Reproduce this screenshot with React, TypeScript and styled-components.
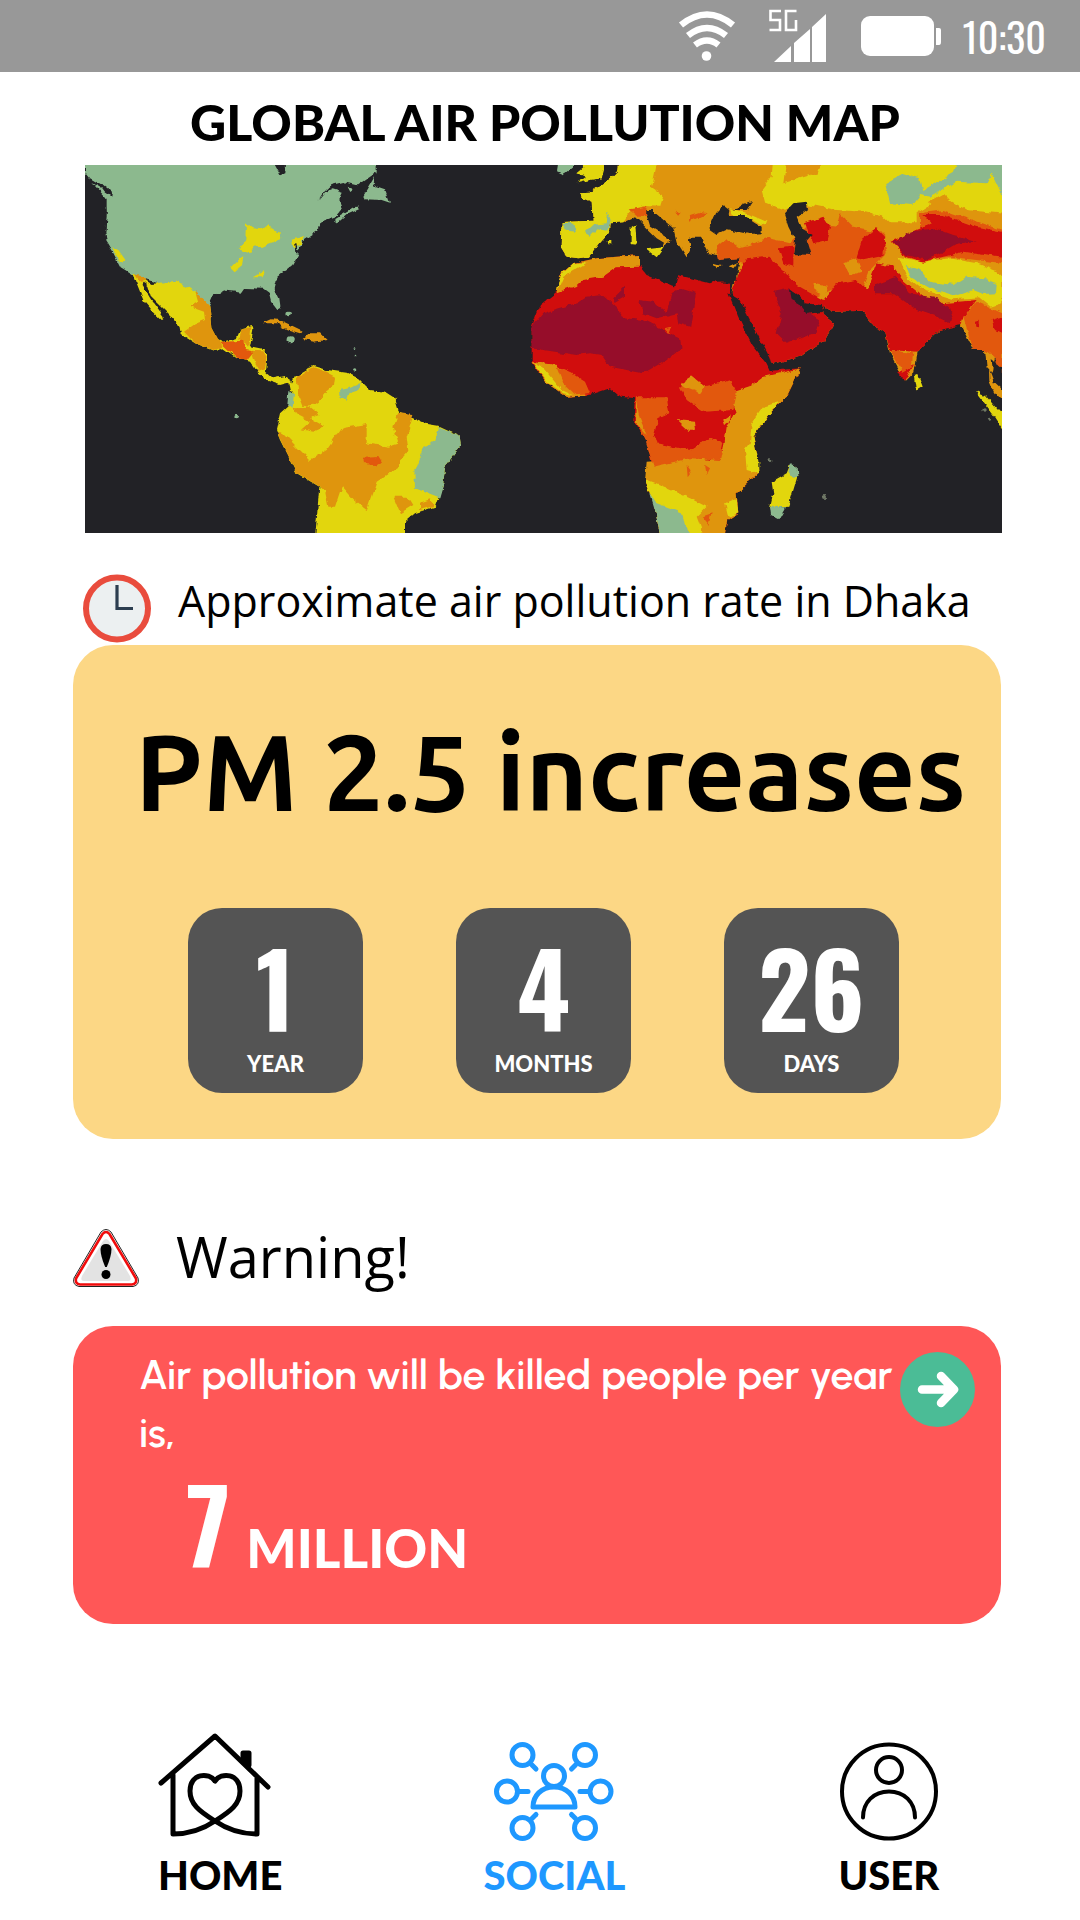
import React from "react";
import styled, { createGlobalStyle } from "styled-components";

const GlobalStyle = createGlobalStyle`
  *, *::before, *::after { box-sizing: border-box; }
  body { margin: 0; background: #fff; color: #000; font-family: "Open Sans", "Noto Sans", sans-serif; }
  h1, h2, p { margin: 0; }
`;

const condensed = `"Oswald", "Liberation Sans Narrow", "Roboto Condensed", "Open Sans Condensed", "DejaVu Sans Condensed", sans-serif`;

const Page = styled.div`
  display: flex;
  flex-direction: column;
  min-height: 100vh;
`;

const StatusBar = styled.header`
  display: flex;
  align-items: center;
  justify-content: flex-end;
  height: 72px;
  padding-right: 34px;
  background: #989898;
  color: #fff;
`;

const StatusIcon = styled.svg<{ $gap: number }>`
  flex: none;
  margin-right: ${(p) => p.$gap}px;
`;

const Time = styled.time`
  font: 400 40px/72px ${condensed};
`;

const Main = styled.main`
  flex: 1;
  padding: 0 79px 0 73px;
`;

const Title = styled.h1`
  padding: 20px 0 0 16px;
  font: 900 50px/60px Lato, sans-serif;
  text-align: center;
`;

const MapImage = styled.svg`
  display: block;
  width: calc(100% - 11px);
  height: auto;
  margin: 13px 0 0 12px;
`;

const SectionHead = styled.div<{ $top: number; $gap: number; $indent: number }>`
  display: flex;
  align-items: flex-start;
  gap: ${(p) => p.$gap}px;
  min-height: 71px;
  margin-top: ${(p) => p.$top}px;
  padding-left: ${(p) => p.$indent}px;
`;

const SectionTitle = styled.h2<{ $size: number }>`
  font: 400 ${(p) => p.$size}px/54px "Open Sans", "Noto Sans", sans-serif;
  white-space: nowrap;
`;

const RateCard = styled.section`
  padding: 66px 32px 46px 62px;
  border-radius: 40px;
  background: #fcd785;
`;

const Headline = styled.p`
  font: 700 107px/120px "Ubuntu", "Noto Sans", "Open Sans", sans-serif;
  white-space: nowrap;
`;

const Tiles = styled.div`
  display: flex;
  justify-content: space-between;
  margin-top: 77px;
  padding: 0 70px 0 53px;
`;

const Tile = styled.div`
  display: flex;
  flex-direction: column;
  align-items: center;
  gap: 6px;
  width: 175px;
  height: 185px;
  padding-top: 23px;
  border-radius: 34px;
  background: #545454;
  color: #fff;
`;

const Figure = styled.span`
  font: 700 101px/112px ${condensed};
`;

const Unit = styled.span`
  font: 900 22px/30px Lato, sans-serif;
`;

const WarningCard = styled.section`
  display: flex;
  justify-content: space-between;
  min-height: 298px;
  margin-top: 26px;
  padding: 20px 26px 20px 66px;
  border-radius: 40px;
  background: #ff5757;
  color: #fff;
`;

const WarningText = styled.p`
  font: 600 41px/58px "Urbanist", "Outfit", Lato, sans-serif;
`;

const Toll = styled.p`
  display: flex;
  align-items: baseline;
  gap: 16px;
  padding: 5px 0 0 47px;
`;

const TollUnit = styled.span`
  font: 900 53px/60px Lato, sans-serif;
`;

const GoButton = styled.button`
  flex: none;
  width: 75px;
  height: 75px;
  margin-top: 6px;
  padding: 0;
  border: 0;
  border-radius: 50%;
  background: #4bbc96;
  cursor: pointer;
`;

const Nav = styled.nav`
  display: grid;
  grid-template-columns: repeat(3, 1fr);
  padding: 0 24px 21px 53px;
`;

const NavLink = styled.a<{ $active?: boolean }>`
  display: flex;
  flex-direction: column;
  align-items: center;
  color: ${(p) => (p.$active ? "#1e98ff" : "#000")};
  font: 900 40px/48px Lato, sans-serif;
  text-decoration: none;

  svg { margin-bottom: 7px; }
`;

const C = {
  sea: "#232227",
  green: "#8cb98e",
  yellow: "#e2d60b",
  orange: "#df950f",
  deep: "#e2590d",
  red: "#d10b0a",
  maroon: "#960a29",
};

function PollutionMap() {
  return (
    <MapImage viewBox="15 15 2751 1104" role="img" aria-label="World map shaded by air pollution level">
      <defs>
        <filter id="coast" x="0" y="0" width="100%" height="100%">
          <feTurbulence type="fractalNoise" baseFrequency="0.04" numOctaves="3" seed="4" result="n" />
          <feDisplacementMap in="SourceGraphic" in2="n" scale="16" xChannelSelector="R" yChannelSelector="G" />
          <feGaussianBlur stdDeviation="1.6" />
        </filter>
      </defs>
      <rect x="15" y="15" width="2751" height="1104" fill={C.sea} />
      <g filter="url(#coast)">
        <rect x="-20" y="-20" width="2830" height="1180" fill={C.sea} />
        {/* The Americas */}
        <path fill={C.green} d="M15 -10V40L32 66 62 86 80 118 80 160 76 215 80 245 98 275 122 322 160 345 240 372 290 380 345 400 385 440 400 405 440 392 485 398 495 384 550 386 566 398 573 425 592 450 602 445 598 415 584 385 592 350 640 312 655 285 660 262 672 240 715 212 722 185 770 168 790 145 850 70 890 40V-10Z" />
        <path fill={C.sea} d="M0 20L40 70 75 110 80 160 76 215 0 240ZM580 10L618 10 616 40 600 46ZM712 125L728 100 755 75 790 66 830 76 850 62 888 36 892 52 865 80 850 112 835 130 845 145 790 148 778 120 788 98 755 88 735 97ZM28 50L70 75 96 95 94 110 66 92 30 66Z" />
        <path fill={C.green} d="M885 48L880 76 915 88 930 128 905 120 855 118 850 108ZM765 178L835 136 840 146 800 165 776 186ZM800 80L818 88 808 96ZM34 66L62 82 88 118 76 112Z" />
        <path fill={C.yellow} d="M498 190L515 204 545 208 566 190 578 210 598 218 604 236 565 252 545 262 524 256 508 280 476 268 496 240ZM452 322L470 304 490 292 486 316 464 334ZM636 240L672 228 664 252 640 262ZM518 352L556 330 548 352ZM96 262L115 270 138 302 120 305Z" />
        <path stroke={C.sea} strokeWidth="7" fill="none" d="M646 250L650 278 662 270" />
        <path fill={C.yellow} d="M160 340L215 372 290 362 345 395 388 436 394 500 412 536 430 545 470 535 482 506 516 497 520 508 510 562 550 570 563 585 558 635 580 655 612 648 634 662 645 696 630 690 625 668 600 675 562 662 535 640 510 602 465 590 430 565 405 573 345 550 302 522 298 500 270 465 215 410 205 378 190 365 188 375 215 420 252 470 245 480 215 450 190 420 170 370Z" />
        <path fill={C.orange} d="M345 390L388 436 394 500 415 538 430 560 400 570 345 550 312 515 345 492 375 480 372 455 330 440 355 425ZM478 540L484 508 514 500 508 560ZM515 572L550 574 560 590 555 628 535 636ZM165 343L190 350 200 362 180 365ZM548 490L575 478 600 480 668 512 660 520 620 508 590 490ZM668 540L690 520 720 520 740 540 700 545Z" />
        <path fill={C.deep} d="M420 545L468 544 486 542 498 570 520 575 500 600 465 588Z" />
        <path fill={C.yellow} d="M645 650L700 618 740 630 800 638 835 655 870 690 915 695 945 715 958 760 985 768 1030 790 1075 797 1135 825 1140 860 1095 920 1090 970 1065 1040 1005 1060 975 1085V1150H704L718 980 650 940 600 840 588 810 600 760 638 725 635 670Z" />
        <path fill={C.orange} d="M650 650L700 622 740 635 768 650 765 675 735 700 720 720 700 735 670 738 655 700ZM740 870L785 805 860 792 860 850 925 860 960 850V920L890 965 860 1050 820 1020 785 980 765 1040 745 1040 735 990 650 938 620 880 590 815 610 820 650 860 690 900ZM640 742L690 740 720 765 690 775 735 800 700 815 665 808 690 785 650 765ZM955 760L1000 765 980 830 985 870 950 910 930 880 955 850 940 800ZM940 1010L985 1010 1000 1035 960 1060ZM1020 1028L1050 1018 1060 1038 1020 1050Z" />
        <path fill={C.deep} d="M850 890L895 888 906 905 890 916 852 912Z" />
        <path fill={C.green} d="M1075 800L1135 825 1140 860 1095 920 1090 970 1078 1012 1005 985 1003 930 1030 860 1062 845ZM780 690L815 682 842 668 838 690 808 700 800 722 782 714ZM625 690L642 700 638 740 622 742Z" />
        <g fill={C.green}><circle cx="470" cy="768" r="7" /><circle cx="626" cy="462" r="7" /><circle cx="632" cy="541" r="9" /><circle cx="822" cy="566" r="4" /><circle cx="828" cy="588" r="4" /><circle cx="824" cy="630" r="5" /></g>

        {/* Europe and Africa */}
        <g transform="translate(930 0)">
          <path fill={C.green} d="M505 -10H552V20L520 46 498 35Z" />
          <path fill={C.yellow} d="M562 -10H642V30L635 55 600 60 560 70 585 50 562 40 580 25Z" />
          <path fill={C.orange} d="M690 -10L685 30 660 56 600 98 570 100 575 112 605 125 608 182 515 186 512 260 530 290 565 295 600 290 625 255 660 215 662 190 700 187 735 172 760 195 800 235 822 248 815 265 845 240 780 200 765 150 785 150 850 205 860 245 890 292 905 262 895 235 945 230 960 280 1060 300 1100 -10Z" />
          <path fill={C.yellow} d="M690 -10L685 30 660 56 600 98 570 100 575 112 605 125 608 182 515 186 512 260 530 290 565 295 600 290 625 255 660 215 662 190 700 187 720 150 765 138 810 140 820 108 785 85 805 -10ZM722 200L736 192 740 254 722 252ZM770 268L822 262 800 292ZM650 240L664 240 664 250 652 250Z" />
          <path fill={C.green} d="M515 188L550 190 555 215 530 212ZM585 218L610 195 650 190 655 155 665 180 655 212 620 208 600 228Z" />
          <path fill={C.deep} d="M716 148L770 140 768 165 740 168ZM858 152L872 158 864 168ZM895 165L955 155 930 185Z" />
          <path fill={C.red} d="M1020 372L980 362 960 370 865 345 855 380 770 345 750 320 750 285 620 295 550 310 510 345 500 395 450 435 425 500 425 610 470 670 530 710 600 705 660 685 690 710 735 715 730 780 770 840 785 910 765 960 790 1020 815 1150H1003L1015 1080 1045 1060 1040 1000 1105 940 1100 880 1090 830 1140 760 1190 710 1232 625 1140 632 1080 500 1020 400Z" />
          <path fill={C.orange} d="M750 285L620 295 550 310 510 345 500 400 560 378 580 360 640 350 680 322 750 320ZM425 606L470 670 530 710 585 706 545 650 500 615ZM770 905L840 900 900 890 960 900 1000 870 1010 800 1040 760 1020 700 1080 680 1120 650 1232 625 1190 710 1140 760 1090 830 1100 880 1105 940 1040 1000 1045 1060 1015 1080 1003 1150H815L790 1020 765 960Z" />
          <path fill={C.deep} d="M500 620L545 640 585 665 600 700 555 703 520 670ZM738 712L830 712 838 760 805 775 790 830 800 850 850 860 900 870 960 830 1000 850 990 900 900 895 790 920 765 835 738 785ZM870 680L900 655 940 680 1025 660 1040 700 1030 750 940 755 890 720Z" />
          <path fill={C.orange} d="M870 670L905 648 945 680 930 700 890 685ZM860 780L915 785 918 812 895 812ZM738 722L748 770 770 825 735 785ZM1000 780L1022 765 1020 785 1005 795Z" />
          <path fill={C.yellow} d="M550 310L590 308 520 350 500 395 508 350ZM430 610L460 625 515 690 550 706 520 700 470 665ZM765 960L830 985 900 1015 950 1040 920 1070 950 1150H815L790 1020ZM1085 790L1120 740 1170 725 1140 760 1090 830 1105 900 1105 940 1070 930 1065 870 1080 850ZM1005 1030L1040 1015 1045 1060 1015 1070Z" />
          <path fill={C.green} d="M780 1000L800 1030 880 1060 890 1110 920 1150H815L795 1050Z" />
          <path fill={C.maroon} d="M425 500L460 458 560 430 590 410 640 405 680 440 700 475 760 480 870 535 875 565 820 605 760 640 660 620 635 585 600 580 560 585 425 565ZM745 420L790 425 830 455 845 400 870 385 918 400 900 500 865 490 860 460 800 475 760 460ZM670 415L705 380 705 410 675 428Z" />
          <path fill={C.deep} d="M825 505L845 500 838 520ZM890 915L905 935 893 952ZM945 915L960 925 950 945ZM935 1070L965 1060 955 1095Z" />
        </g>

        {/* Asia */}
        <g transform="translate(1830 0)">
          <path fill={C.orange} d="M0 -10H980V640L937 625 915 595 905 635 890 620 885 570 850 570 830 530 810 490 750 510 680 575 670 640 645 665 600 580 585 515 560 505 540 480 515 452 430 455 400 440 400 465 432 490 405 540 330 590 245 612 190 500 150 420 125 400 150 295 55 280 30 230 0 230Z" />
          <path fill={C.yellow} d="M250 -10L245 50 215 90 225 130 280 150 340 130 440 150 520 155 580 170 600 190 680 190 680 160 760 110 830 150 980 165V-10H400L380 40 280 70 290 -10ZM120 145L170 160 230 185 215 195 190 180 130 165Z" />
          <path fill={C.green} d="M585 70L640 40 690 55 700 90 790 40 810 -10H980V115L937 105 905 40 890 70 800 65 720 110 690 105 670 135 600 130Z" />
          <path fill={C.deep} d="M80 260L110 235 150 262 240 235 300 250 360 190 440 200 450 160 490 200 540 210 585 215 590 280 540 330 520 380 440 380 380 410 330 390 280 330 90 300ZM690 160L760 150 937 210V310L780 290 690 300ZM820 470L860 425 937 460V640L915 595 885 570 850 570Z" />
          <path fill={C.red} d="M125 400L150 330 170 298 235 290 290 340 320 375 400 420 440 370 500 360 530 390 560 310 610 320 640 360 700 410 760 430 860 420 820 470 815 495 750 510 680 575 600 570 585 515 560 505 540 480 515 452 430 455 400 440 400 465 432 490 405 540 330 590 245 612 190 500ZM345 190L400 170 420 200 410 240 370 250ZM265 265L310 260 310 320 280 310ZM515 240L560 205 585 230 580 285 520 298 500 290ZM605 245L680 210 730 190 700 165 760 165 860 200 980 225V300L820 275 700 305 650 290ZM640 630L672 610 645 665 625 640ZM905 480L937 470V520L915 510Z" />
          <path fill={C.orange} d="M460 310L500 295 515 335 480 345ZM370 370L410 380 405 410 380 400ZM580 235L610 250 640 310 600 310ZM715 125L760 100 800 140 750 150Z" />
          <path fill={C.maroon} d="M610 248L660 215 735 205 790 225 860 242 800 252 760 275 710 300 650 285ZM250 395L300 385 345 450 390 480 375 520 290 548 260 520 275 460ZM555 375L620 350 660 400 740 415 790 455 780 490 740 470 680 450 610 400 555 400Z" />
          <path fill={C.yellow} d="M625 290L700 305 780 295 860 310 937 340V430L905 440 870 412 790 418 700 390 650 350Z" />
          <path fill={C.green} d="M650 318L690 330 720 365 790 375 830 350 880 355 920 375 918 400 880 402 850 390 800 408 720 385 660 350Z" />
          <path fill={C.deep} d="M600 570L670 580 665 620 640 635 615 600ZM30 155L50 160 0 185V165Z" />
          <path fill={C.red} d="M855 485L866 482 866 502 856 500Z" />
          <path fill={C.sea} d="M55 205L75 160 98 135 118 150 115 165 160 165 215 200 215 220 180 222 110 208 80 222ZM132 150L158 132 188 122 170 150ZM282 160L310 130 350 125 355 145 320 170 335 205 368 225 350 245 362 285 310 282 315 240 295 200ZM300 388L325 405 345 430 395 435 400 455 350 462 325 430 305 420ZM115 400L150 420 190 500 238 590 245 614 225 606 186 556 154 492ZM0 230L30 230 40 280 90 300 148 295 140 365 80 368 0 345ZM905 600L937 625V690L915 670Z" />
          <path fill={C.orange} d="M70 308L95 315 80 325ZM118 318L145 305 130 325ZM897 625L912 665 950 700V740L915 700 898 660Z" />
          <path fill={C.yellow} d="M672 648L685 645 698 680 678 692ZM855 692L885 705 950 780V825L915 770Z" />
          <path fill={C.yellow} d="M300 915L315 915 322 950 295 1040 240 1045 250 1000 245 965 290 940Z" />
          <path fill={C.green} d="M303 910L320 920 322 952 305 948 295 935ZM240 1040L288 1042 268 1078 243 1065Z" />
          <g fill="#6f7966"><circle cx="405" cy="1008" r="6" /><circle cx="240" cy="902" r="4" /><circle cx="882" cy="750" r="5" /><circle cx="898" cy="778" r="5" /></g>
        </g>
      </g>
    </MapImage>
  );
}

const periods = [
  { value: "1", unit: "YEAR" },
  { value: "4", unit: "MONTHS" },
  { value: "26", unit: "DAYS" },
];

const satellites = [
  [28.5, 13, 38, 23, 42, 27],
  [91, 13, 81.5, 23, 77.5, 27],
  [13, 49.5, 26, 49.5, 34, 49.5],
  [106.5, 49.5, 94, 49.5, 86, 49.5],
  [28.5, 86, 38, 76.5, 42, 72.5],
  [91, 86, 81.5, 76.5, 77.5, 72.5],
];

export default function App() {
  return (
    <Page>
      <GlobalStyle />
      <StatusBar>
        <StatusIcon $gap={32} width="58" height="50" viewBox="0 0 58 50" fill="none" stroke="#fff" strokeWidth="6.5" aria-label="Wi-Fi">
          <path d="M3 14Q29 -7 55 14M10 24.500Q29 9.500 48 24.500M17 34Q29 25 40.500 34" />
          <circle cx="28.500" cy="45" r="4.800" fill="#fff" stroke="none" />
        </StatusIcon>
        <StatusIcon $gap={35} width="58" height="54" viewBox="0 0 58 54" fill="#fff" aria-label="5G signal">
          <path d="M6 53L23 37V53ZM26 34L42 20V53H26ZM44 18L58 5V53H44Z" />
          <path fill="none" stroke="#fff" strokeWidth="2.600" d="M13 2H2.500V11H12V21H1.500M28.500 2H18V21H28V11" />
        </StatusIcon>
        <StatusIcon $gap={21} width="81" height="40" viewBox="0 0 81 40" fill="#fff" aria-label="Battery full">
          <rect width="73" height="40" rx="9" />
          <path d="M75 12H78Q80 12 80 14V26Q80 29 78 29H75Z" />
        </StatusIcon>
        <Time>10:30</Time>
      </StatusBar>

      <Main>
        <Title>GLOBAL AIR POLLUTION MAP</Title>
        <PollutionMap />

        <SectionHead $top={41} $gap={27} $indent={10}>
          <svg width="68" height="69" viewBox="0 0 68 69" aria-hidden="true">
            <circle cx="34" cy="34.500" r="31" fill="#ecf0f1" stroke="#e94c3d" strokeWidth="6" />
            <path d="M34 11V34.500H50" fill="none" stroke="#2c3e50" strokeWidth="3.200" />
          </svg>
          <SectionTitle $size={43}>Approximate air pollution rate in Dhaka</SectionTitle>
        </SectionHead>

        <RateCard>
          <Headline>PM 2.5 increases</Headline>
          <Tiles>
            {periods.map((p) => (
              <Tile key={p.unit}>
                <Figure>{p.value}</Figure>
                <Unit>{p.unit}</Unit>
              </Tile>
            ))}
          </Tiles>
        </RateCard>

        <SectionHead $top={90} $gap={37} $indent={0}>
          <svg width="66" height="58" viewBox="0 0 66 58" aria-hidden="true">
            <path d="M28 3Q33 -2 38 3L65 49Q67 56 60 57.500H6Q-1 56 1 49Z" fill="#fff" stroke="#222" strokeWidth="1" />
            <path d="M29.500 5Q33 1 36.500 5L63 49.500Q64 55 59 55.500H7Q2 55 3 49.500Z" fill="#fff" stroke="#f10b0b" strokeWidth="2.600" />
            <path d="M30 12Q33 8 36 12L57 47Q59 52 55 52H11Q7 52 9 47Z" fill="#e3e3e3" />
            <path d="M27.500 20Q28 15 33 15T38.500 20Q38.500 27 33.800 38H32.200Q27.500 27 27.500 20Z" />
            <circle cx="33" cy="45.500" r="4.500" />
          </svg>
          <SectionTitle $size={56}>Warning!</SectionTitle>
        </SectionHead>

        <WarningCard>
          <div>
            <WarningText>Air pollution will be killed people per year is,</WarningText>
            <Toll>
              <Figure>7</Figure>
              <TollUnit>MILLION</TollUnit>
            </Toll>
          </div>
          <GoButton aria-label="See details">
            <svg width="75" height="75" viewBox="0 0 75 75" fill="none" stroke="#fff" strokeWidth="8.500" strokeLinecap="round" strokeLinejoin="round" aria-hidden="true">
              <path d="M22 37.500H52M41 24L54 37.500 41 51" />
            </svg>
          </GoButton>
        </WarningCard>
      </Main>

      <Nav>
        <NavLink href="#home">
          <svg width="124" height="112" viewBox="0 0 124 112" fill="none" stroke="#000" strokeWidth="5" strokeLinecap="round" strokeLinejoin="round" aria-hidden="true">
            <path d="M3 51L57 4 110 55M15 43V102Q38 102 57 89C73 79 82 72 82 59C82 41 63 40 57 49C51 40 32 41 32 59C32 72 41 79 57 89Q76 102 99 102V45" />
            <path d="M85 21H91V33L85 28Z" fill="#000" />
          </svg>
          HOME
        </NavLink>
        <NavLink href="#social" $active>
          <svg width="120" height="112" viewBox="0 -10 120 112" fill="none" stroke="currentColor" strokeWidth="5" strokeLinecap="round" strokeLinejoin="round" aria-hidden="true">
            {satellites.map(([cx, cy, x1, y1, x2, y2]) => (
              <g key={`${cx}-${cy}`}>
                <circle cx={cx} cy={cy} r="10.500" />
                <path d={`M${x1} ${y1}L${x2} ${y2}`} />
              </g>
            ))}
            <circle cx="60" cy="34" r="10.500" />
            <path d="M39 65C39 54 47 45 60 45S81 54 81 65Z" />
          </svg>
          SOCIAL
        </NavLink>
        <NavLink href="#user">
          <svg width="98" height="112" viewBox="0 -10 98 112" fill="none" stroke="#000" strokeWidth="4" strokeLinecap="round" aria-hidden="true">
            <circle cx="49" cy="49.500" r="47" />
            <circle cx="49" cy="28" r="13" />
            <path d="M23 75.500C23 60 34 49.500 49 49.500S75 60 75 75.500" />
          </svg>
          USER
        </NavLink>
      </Nav>
    </Page>
  );
}
